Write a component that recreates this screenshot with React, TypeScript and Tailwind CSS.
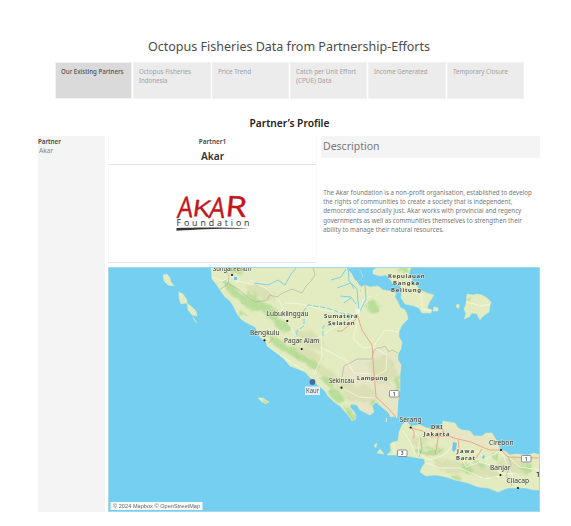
import React from "react";

const tabs: [string, number][][] = [
  [["Our Existing Partners", 62.5]],
  [["Octopus Fisheries", 52], ["Indonesia", 28.5]],
  [["Price Trend", 33]],
  [["Catch per Unit Effort", 60], ["(CPUE) Data", 35.5]],
  [["Income Generated", 53.5]],
  [["Temporary Closure", 55]],
];

const description: [string, number][] = [
  ["The Akar foundation is a non-profit organisation, established to develop", 208.5],
  ["the rights of communities to create a society that is independent,", 189],
  ["democratic and socially just. Akar works with provincial and regency", 198],
  ["governments as well as communities themselves to strengthen their", 198.5],
  ["ability to manage their natural resources.", 120.5],
];

type FitProps = { x?: number; y: number; w: number; size: number; fill: string; weight?: number; children: string };

// A line of text fitted to a measured width.
function Fit({ x = 0, y, w, size, fill, weight = 400, children }: FitProps) {
  return (
    <text x={x} y={y} textLength={w} lengthAdjust="spacingAndGlyphs" fontSize={size} fill={fill} fontWeight={weight}>
      {children}
    </text>
  );
}

const sumatra =
  "M211 267L212 279L216 284L220 290L225 297L230 301L234 307L237 314L241 319L245 322L255 327L260 337L266 342L267 346L278 354L284 359L290 366L298 369L305 372L313 381L325 391L328 396L334 402L340 406L345 412L348 415L352 421L356 419L355 413L350 407L351 404L357 405L360 410L370 415L374 412L372 406L376 402L383 408L388 412L391 417L394 416L397 418L398 401L400 390L400 375L401 365L398 360L398 354L401 349L402 342L399 337L399 332L402 325L408 319L407 314L405 310L400 307L398 302L395 297L396 293L390 291L383 290L378 286L370 287L365 285L361 287L357 282L363 277L360 270L354 270L346 267Z";
const bangka =
  "M383 267L377 268L373 270L373 274L380 276L386 275L390 279L393 284L400 285L402 290L401 298L405 304L414 306L419 308L422 313L431 313L432 310L427 308L429 303L434 295L427 293L420 290L416 285L412 284L412 278L409 274L411 267Z";
const java =
  "M387 455L391 451L390 444L393 442L398 441L399 432L402 425L406 421L411 426L420 425L427 428L441 429L443 421L449 422L455 423L458 428L462 430L470 431L474 436L482 436L486 433L492 433L495 438L498 443L500 450L505 451L510 455L516 454L528 455L534 453L540 455V490L534 490L525 488L518 488L508 488L498 492L488 488L478 487L468 483L455 480L446 477L435 475L426 476L420 472L422 467L425 463L424 459L418 458L401 455Z";
const islands =
  "M163 275L167 274L170 278L171 282L174 286L168 285L164 281ZM179 292L183 294L187 300L187 303L181 304L179 298ZM187 303L192 307L196 311L197 316L192 315L188 310ZM193 317L197 323L195 321ZM467 294L473 295L477 294L482 295L487 298L491 302L490 306L489 312L482 317L480 320L477 314L472 313L469 317L464 319L466 314L464 309L466 304ZM434 307L438 308L438 311L433 311ZM456 305L459 304L459 308L457 308ZM258 398L263 398L269 402L266 404L262 402ZM374 445L377 443L376 448ZM377 453L380 449L384 454ZM360 289L361 291L360 292ZM386 418L387 420L386 422Z";

type LabelProps = { x: number; y: number; w: number; t: string; bold?: boolean };
function Place({ x, y, w, t, bold }: LabelProps) {
  return (
    <text
      x={x}
      y={y}
      textLength={w}
      lengthAdjust={bold ? "spacing" : "spacingAndGlyphs"}
      fontSize={bold ? 6 : 7}
      fontWeight={bold ? 600 : 400}
      fill="#303337"
      stroke="#f3f3df"
      strokeWidth="1.2"
      strokeOpacity=".7"
      paintOrder="stroke"
    >
      {t}
    </text>
  );
}

const places: LabelProps[] = [
  { x: 213, y: 271, w: 38, t: "Sungai Penuh" },
  { x: 266.5, y: 316, w: 42, t: "Lubuklinggau" },
  { x: 250, y: 334.7, w: 29.5, t: "Bengkulu" },
  { x: 284, y: 343.3, w: 35.5, t: "Pagar Alam" },
  { x: 329, y: 383.3, w: 25.5, t: "Sekincau" },
  { x: 324, y: 318, w: 33.5, t: "Sumatera", bold: true },
  { x: 328, y: 325, w: 26.5, t: "Selatan", bold: true },
  { x: 357, y: 380, w: 30.5, t: "Lampung", bold: true },
  { x: 388, y: 278, w: 36.5, t: "Kepulauan", bold: true },
  { x: 393, y: 285, w: 26, t: "Bangka", bold: true },
  { x: 391, y: 292, w: 30, t: "Belitung", bold: true },
  { x: 399.5, y: 422.3, w: 22, t: "Serang" },
  { x: 431, y: 429, w: 11.5, t: "DKI", bold: true },
  { x: 423.5, y: 436, w: 26, t: "Jakarta", bold: true },
  { x: 457, y: 453, w: 17, t: "Jawa", bold: true },
  { x: 456, y: 460, w: 19, t: "Barat", bold: true },
  { x: 489, y: 445, w: 24.5, t: "Cirebon" },
  { x: 490, y: 470, w: 20.5, t: "Banjar" },
  { x: 506.5, y: 483.3, w: 22.5, t: "Cilacap" },
];

const towns = [
  [232, 275], [287.3, 321], [264.5, 340.3], [301.7, 349], [341.5, 387.7],
  [410.7, 427.5], [501, 450], [500.5, 475], [518, 488],
];

const hills = [
  [232, 290, 10, 4, 48], [241, 296, 10, 3, 30], [249, 304, 12, 4, 30], [262, 306, 12, 4, 35],
  [271, 313, 8, 6, 42], [282, 325, 9, 5, 30], [278, 343, 10, 4, 38], [291, 351, 9, 4, 35],
  [301, 358, 8, 3, 25], [312, 364, 9, 4, 35], [327, 381, 7, 3, 45], [336, 395, 11, 5, 45],
  [350, 414, 8, 3, 60], [235, 270, 9, 3, 5], [252, 296, 5, 3, 0], [243, 315, 3, 2, 0],
  [373, 307, 6, 6, 5], [373, 403, 4, 3, 10], [398, 383, 3, 9, 0], [420, 451, 5, 3, 20],
  [430, 452, 6, 5, 10], [440, 451, 4, 4, 0], [456, 477, 5, 2, 15], [468, 469, 5, 4, 10],
  [495, 456, 3, 4, 0], [480, 464, 7, 2, 20], [526, 467, 7, 4, 0], [469, 299, 2, 2, 0],
  [403, 270, 5, 3, 0], [388, 451, 3, 3, 0], [265, 402, 3, 1.5, 20],
];

const terrain = [
  [305, 355, 18, 7, 20], [326, 373, 14, 5, 35], [310, 340, 14, 8, 30], [360, 394, 16, 8, 0],
  [345, 386, 10, 5, 10], [420, 441, 10, 5, 0], [451, 466, 18, 6, 10], [484, 472, 16, 6, 12],
  [514, 466, 16, 8, 10], [261, 292, 16, 6, 25], [383, 370, 13, 14, 0],
];

function Shield({ x, y, t }: { x: number; y: number; t: string }) {
  return (
    <g>
      <rect x={x} y={y} width="9.5" height="6.5" rx="1" fill="#fff" stroke="#77797b" strokeWidth=".8" />
      <text x={x + 4.75} y={y + 5.2} textAnchor="middle" fontSize="5" fontWeight="600" fill="#444">{t}</text>
    </g>
  );
}

function Blobs({ items }: { items: number[][] }) {
  return (
    <>
      {items.map(([x, y, rx, ry, a], i) => (
        <ellipse key={i} cx={x} cy={y} rx={rx} ry={ry} transform={`rotate(${a} ${x} ${y})`} />
      ))}
    </>
  );
}

function PartnerMap() {
  return (
    <svg className="block h-[245px] w-[432px]" viewBox="108 267 432 245" fontFamily="Noto Sans, sans-serif">
      <defs>
        <clipPath id="land"><path d={sumatra + bangka + java + islands} /></clipPath>
        <filter id="soft" x="-20%" y="-20%" width="140%" height="140%">
          <feGaussianBlur stdDeviation="1.2" result="b" />
          <feTurbulence type="fractalNoise" baseFrequency=".13" numOctaves="2" seed="7" result="n" />
          <feDisplacementMap in="b" in2="n" scale="9" />
        </filter>
        <filter id="relief" x="0" y="0" width="100%" height="100%">
          <feTurbulence type="fractalNoise" baseFrequency=".2" numOctaves="2" seed="4" />
          <feColorMatrix values="0 0 0 0 .45  0 0 0 0 .68  0 0 0 0 .36  0 3 0 0 -1.35" />
          <feComposite in2="SourceGraphic" operator="in" />
        </filter>
      </defs>
      <rect x="108" y="267" width="432" height="245" fill="#75cff0" />
      <path d={sumatra + bangka + java + islands} fill="#e3ecc0" stroke="#dce9bd" strokeWidth=".5" />
      <g clipPath="url(#land)">
        <path d="M342 377L344 366L357 359L372 359L374 350L385 346L389 352L398 354L404 365V420H370L345 395ZM422 430L440 428L458 428L500 440L500 452L470 444L440 438Z" fill="#e6e5c6" filter="url(#soft)" />
        <g filter="url(#soft)" fill="#d6dcae" opacity=".75"><Blobs items={terrain} /></g>
        <g filter="url(#soft)" fill="#b3dc92" opacity=".85"><Blobs items={hills} /></g>
        <g filter="url(#relief)" opacity=".6">
          <Blobs items={hills.slice(0, 13)} />
          <Blobs items={hills.slice(19, 27)} />
        </g>
        <g fill="none" stroke="#faf9e9" strokeWidth=".8" opacity=".9">
          <path d="M211 276L222 281L232 276L237 281L255 285M250 280L267 289L281 303L285 318L291 327L296 337L311 341L321 336L333 328L357 317M284 303L302 304L323 310L342 312L358 315M265 345L283 357L304 371M321 337L322 357L314 374M320 347L347 361L354 373L373 374M336 382L346 390L359 397L374 398M359 316L353 338L363 348L373 347L387 355L386 370L374 377M399 332L385 330L373 347M359 314L363 300L371 296" />
          <path d="M419 284L422 300L422 309L431 311M466 302L474 304L482 306L490 304M403 431L411 443L415 455M411 428L420 438L418 453L430 460L444 455L455 443M457 439L461 457L466 467L480 462L490 465L502 474L516 473L526 487M426 463L440 468L460 468L485 479L500 476M477 451L486 459L501 450L507 465L518 486M510 458L520 467L540 470M394 443V454" />
        </g>
        <g fill="none" stroke="#a7aca0" strokeWidth=".7" opacity=".85">
          <path d="M219 290L228 284L229 276L224 267M229 284L238 289L250 299L256 302L267 300L270 295L277 297L281 294L292 289L302 293L306 286L311 281L315 275L313 267M398 353L392 350L389 352L385 346L380 348L377 348L374 350L372 359L357 359L350 363L344 366L342 377M420 437L422 448L419 457M508 456L511 465L506 475L512 486" />
        </g>
        <g fill="none" stroke="#80d0e4" strokeWidth="1">
          <path d="M254 283L268 285L278 280L285 285L291 274L297 267" />
          <path d="M303 312L308 305L327 308L341 313L357 315M304 312L304 326L297 331L296 337M323 336L323 326L343 324L353 316" strokeDasharray="5 2" />
          <path d="M348 267L349 281L357 289L359 312M365 284L366 299L359 313M331 280L341 277L346 269M337 288L351 283L354 289M340 296L351 297L356 304M344 303L351 298M361 267L360 281" />
        </g>
        <path d="M346 267L352 274L355 280L360 283L363 277L359 269Z" fill="#75cff0" />
        <path d="M357 314L362 330L372 345L374 373L376 397L387 407L396 417M356 319L349 325L342 331H337M269 343L273 338M411 428L414 431V438M411 428L423 431L431 437L448 436L458 439L471 442L482 447L490 450L501 450L508 457L540 458M430 429H443V435M439 432L437 445L435 455M458 439L459 449L456 455M482 449L476 458" fill="none" stroke="#eda27f" strokeWidth=".9" />
        <path d="M453 442L457 443L456 449L454 452L452 450ZM483 455L485 456L484 459L482 458ZM234 277H237V280H234Z" fill="#70c9ed" />
        <circle cx="358" cy="311" r="2.4" fill="#f6f3e7" />
      </g>
      {towns.map(([x, y], i) => <circle key={i} cx={x} cy={y} r="1.1" fill="#111" />)}
      {places.map((p) => <Place key={p.t} {...p} />)}
      <text x="536.5" y="476.5" fontSize="6.3" fontWeight="600" fill="#303337">T</text>
      <Shield x={389.5} y={390.5} t="1" />
      <Shield x={397.5} y={450} t="3" />
      <Shield x={521.5} y={455.5} t="1" />
      <circle cx="312.5" cy="382" r="2.9" fill="#416f9f" />
      <rect x="305" y="386.5" width="15" height="8.5" fill="#e8edf0" />
      <Fit x={306} y={393.3} w={13} size={6.8} fill="#49525b">Kaur</Fit>
      <rect x="110.5" y="502" width="92" height="8" fill="#f6f9fa" />
      <text x="113" y="508.2" textLength="87" fontSize="5.5" fontFamily="Liberation Sans, sans-serif" fill="#666">© 2024 Mapbox © OpenStreetMap</text>
      <rect x="108.5" y="267.5" width="431" height="244" fill="none" stroke="#a7d7e9" strokeWidth="1" />
    </svg>
  );
}

function AkarLogo() {
  return (
    <svg className="mt-[14px] h-[60px] w-[92px]" viewBox="167 180 92 60" fontFamily="Open Sans, sans-serif">
      <g fill="#c4141c" stroke="#c4141c" strokeWidth=".4" strokeLinejoin="round" fontSize="28">
        <text transform="translate(176.5 219) rotate(-3) skewX(-9) scale(.88 1.04)">A</text>
        <text transform="translate(191.5 217) rotate(3) skewX(-5) scale(1.05 .82)">K</text>
        <text transform="translate(208 218.5) skewX(-9) scale(.9 1.02)">A</text>
        <text transform="translate(224.5 217) rotate(3) skewX(-3) scale(1.24 1.02)">R</text>
      </g>
      <text x="176.5" y="226.8" textLength="73" fontSize="8.8" fill="#292929">Foundation</text>
      <path d="M176.5 229C197 228.4 225 228.2 249 229.7C222 229.5 197 230.1 176.5 231.8Z" fill="#343434" />
    </svg>
  );
}

export default function App() {
  return (
    <main className="h-[526px] w-[571px] overflow-hidden bg-white pl-[38px] font-['Noto_Sans',sans-serif]">
      <h1 className="h-[62px] pt-[36px]">
        <svg className="ml-[109px] h-5 w-[286px]">
          <Fit x={1} y={15} w={282} size={12.5} fill="#4b4b4b">Octopus Fisheries Data from Partnership-Efforts</Fit>
        </svg>
      </h1>
      <nav className="ml-[17px] grid h-[37px] w-[469px] grid-cols-6 gap-px">
        {tabs.map((lines, i) => (
          <button
            key={lines[0][0]}
            className={`flex h-[37px] flex-col items-start justify-start border border-[#f2f2f2] pl-[5px] pt-[4px] ${i === 0 ? "bg-[#dadada]" : "bg-[#ececec]"}`}
          >
            <svg className="h-[22px] w-[68px]">
              {lines.map(([line, w], row) => (
                <Fit key={line} y={7.3 + row * 9} w={w} size={6.3} weight={i === 0 ? 500 : 400} fill={i === 0 ? "#505050" : "#a0a0a0"}>{line}</Fit>
              ))}
            </svg>
          </button>
        ))}
      </nav>
      <h2 className="h-[37px] pt-[16px]">
        <svg className="ml-[210px] h-5 w-[84px]">
          <Fit x={1.5} y={12} w={80} size={10.5} weight={600} fill="#222">Partner’s Profile</Fit>
        </svg>
      </h2>
      <div className="flex h-[376px] w-[502px]">
        <aside className="mr-[3px] w-[67px] bg-[#f4f4f4] pt-[1px] text-[6.2px] leading-[9px]">
          <div className="font-semibold text-[#444]">Partner</div>
          <div className="pl-[1px] text-[6.7px] text-[#888]">Akar</div>
        </aside>
        <div className="flex w-[432px] flex-col">
          <div className="flex h-[131px]">
            <section className="flex h-[127px] w-[209px] flex-col items-center border border-t-0 border-[#f8f8f8] border-b-[#e4e4e4]">
              <div className="flex h-[29px] w-full flex-col items-center border-b border-[#e4e4e4] pt-[1px]">
                <span className="text-[6.4px] font-semibold leading-[9px] text-[#444]">Partner1</span>
                <span className="mt-[2px] text-[10.2px] font-semibold leading-4 text-[#333]">Akar</span>
              </div>
              <AkarLogo />
            </section>
            <section className="ml-[4px] w-[219px]">
              <div className="h-[22px] bg-[#f4f4f4] pl-[2px] text-[10.5px] leading-[21px] text-[#777]">Description</div>
              <svg className="h-[90px] w-[219px]">
                {description.map(([line, width], i) => (
                  <Fit key={line} x={2.3} y={37 + i * 9.2} w={width} size={6.3} fill="#777">{line}</Fit>
                ))}
              </svg>
            </section>
          </div>
          <PartnerMap />
        </div>
      </div>
    </main>
  );
}
